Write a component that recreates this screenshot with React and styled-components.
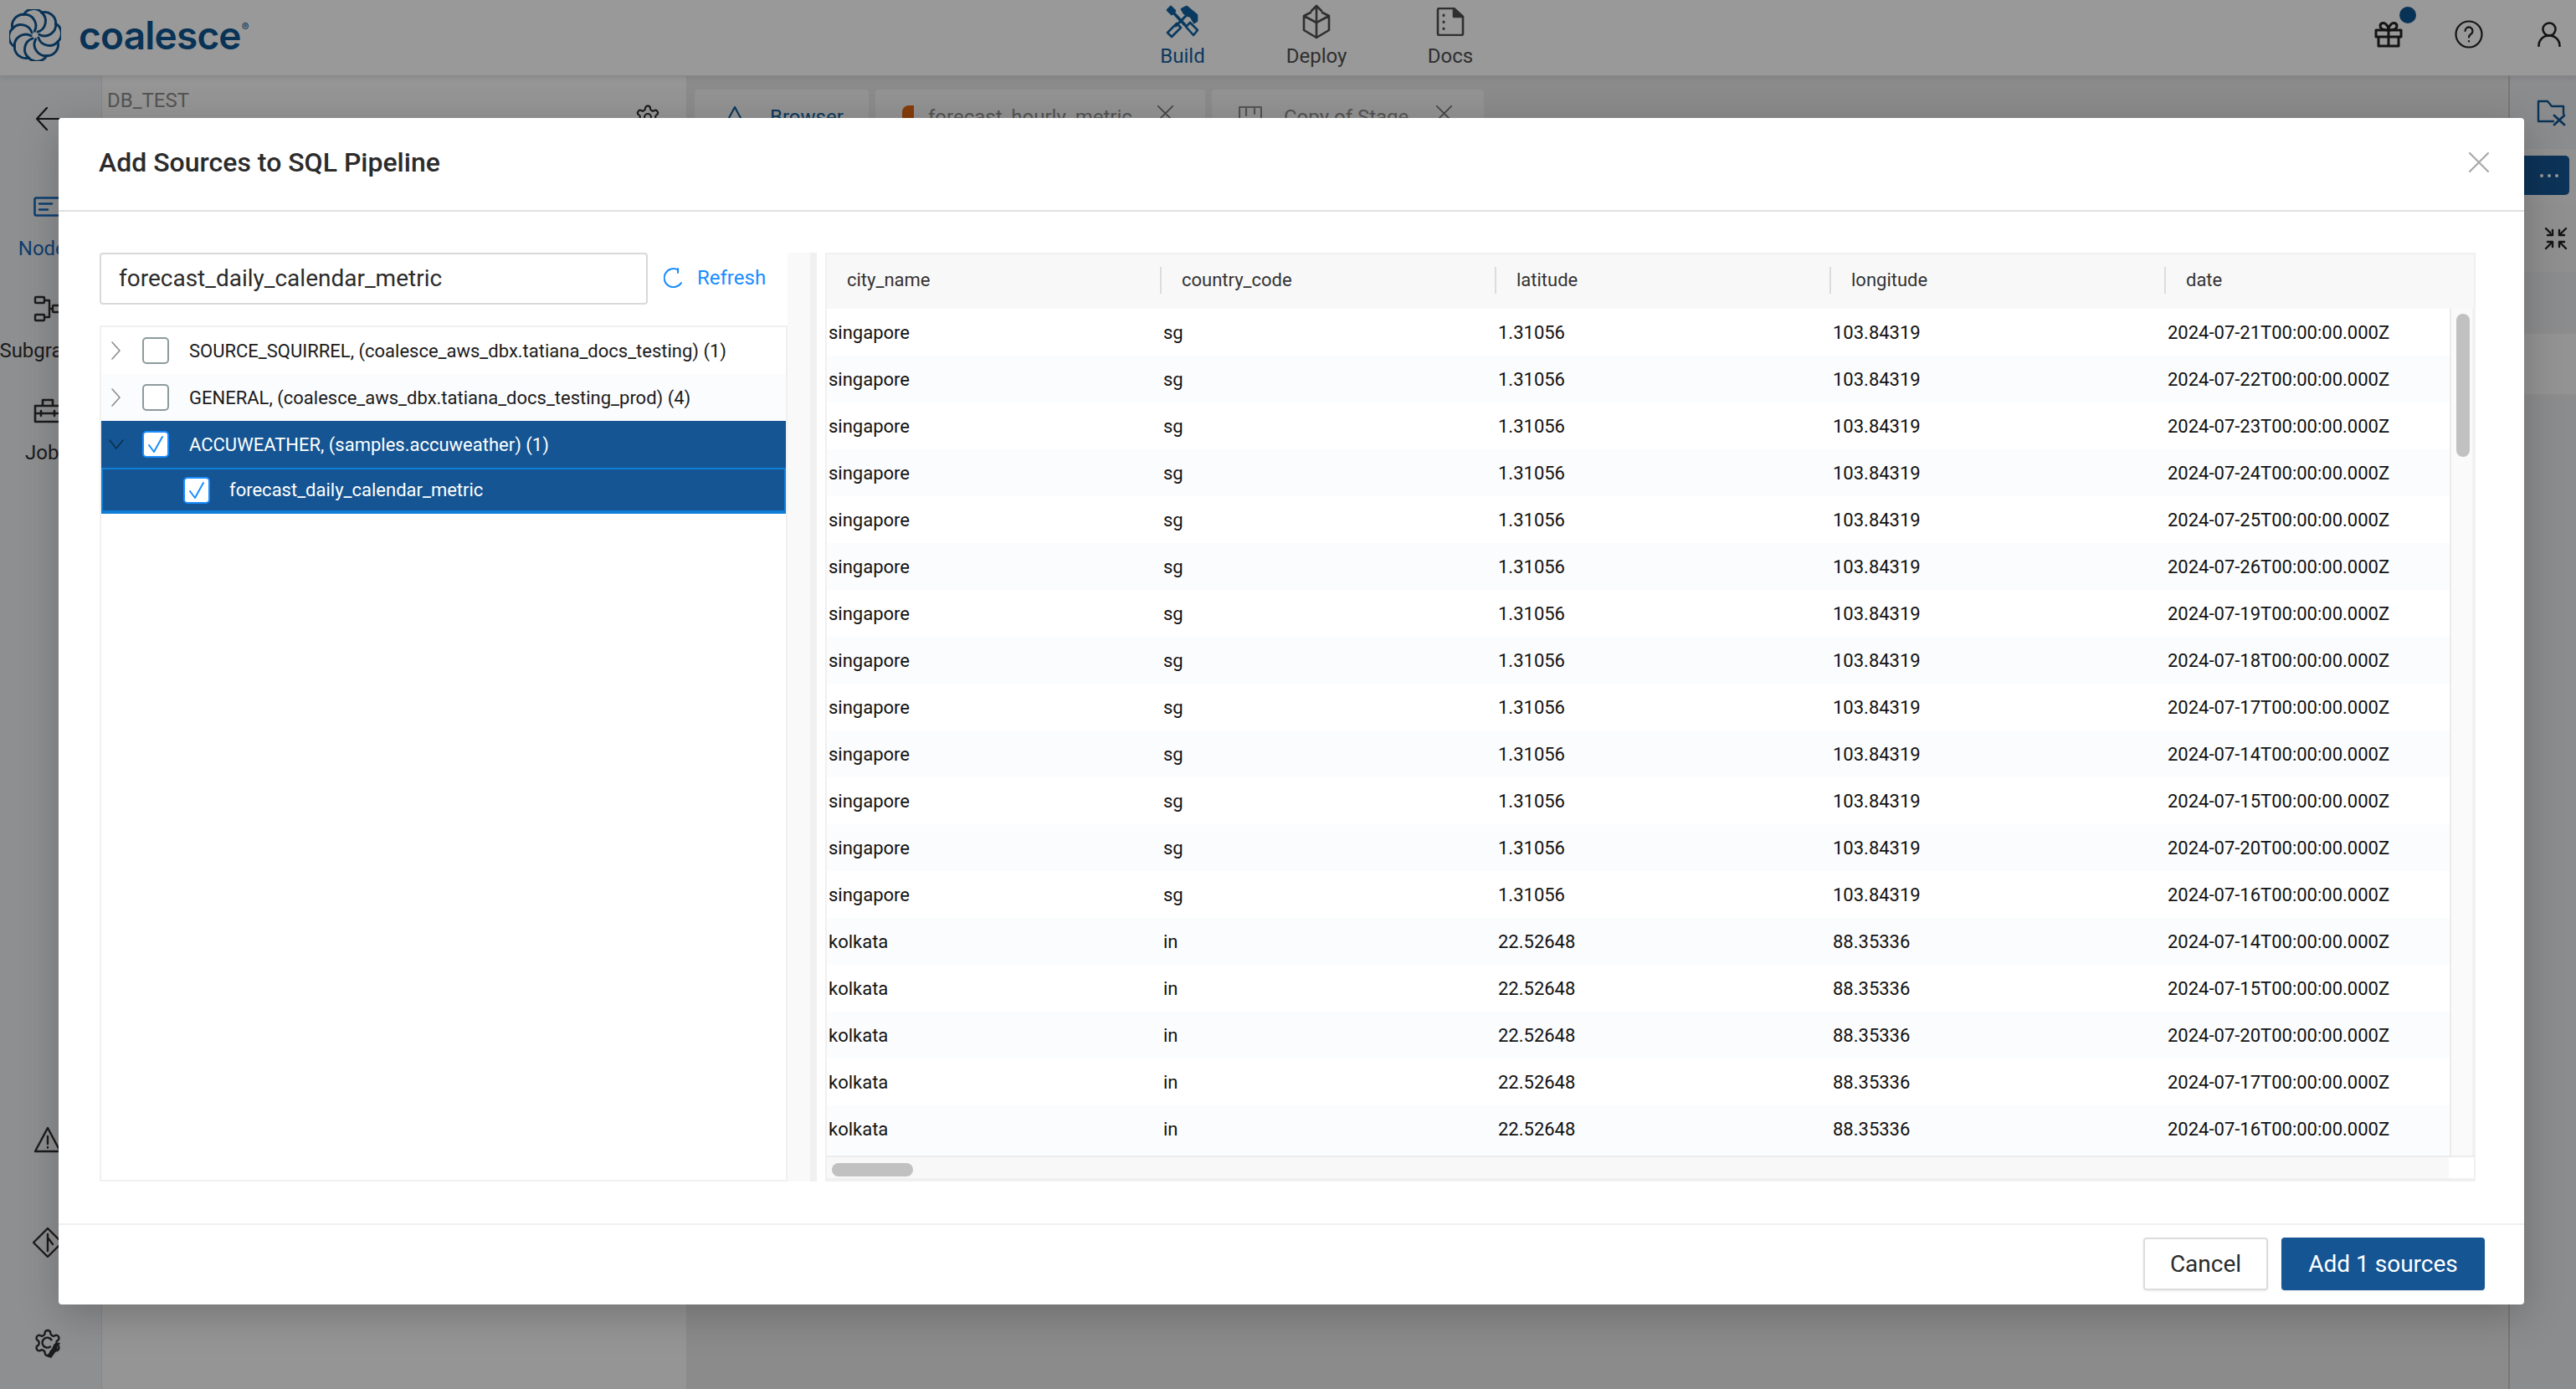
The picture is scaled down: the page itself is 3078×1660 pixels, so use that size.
import React from "react";
import styled, { createGlobalStyle } from "styled-components";

const GlobalStyle = createGlobalStyle`
  html, body { margin: 0; padding: 0; }
  body { font-family: Roboto, "Liberation Sans", sans-serif; background: #ecedf1; }
  * { box-sizing: border-box; }
`;

const DATES_SG = ["21", "22", "23", "24", "25", "26", "19", "18", "17", "14", "15", "20", "16"];
const DATES_KO = ["14", "15", "20", "17", "16"];
const ROWS = [
  ...DATES_SG.map((d) => ["singapore", "sg", "1.31056", "103.84319", `2024-07-${d}T00:00:00.000Z`]),
  ...DATES_KO.map((d) => ["kolkata", "in", "22.52648", "88.35336", `2024-07-${d}T00:00:00.000Z`]),
];
const COLUMNS = ["city_name", "country_code", "latitude", "longitude", "date"];

const GEAR_PATH =
  "M12.22 2h-.44a2 2 0 0 0-2 2v.18a2 2 0 0 1-1 1.73l-.43.25a2 2 0 0 1-2 0l-.15-.08a2 2 0 0 0-2.73.73l-.22.38a2 2 0 0 0 .73 2.73l.15.1a2 2 0 0 1 1 1.72v.51a2 2 0 0 1-1 1.74l-.15.09a2 2 0 0 0-.73 2.73l.22.38a2 2 0 0 0 2.73.73l.15-.08a2 2 0 0 1 2 0l.43.25a2 2 0 0 1 1 1.73V20a2 2 0 0 0 2 2h.44a2 2 0 0 0 2-2v-.18a2 2 0 0 1 1-1.73l.43-.25a2 2 0 0 1 2 0l.15.08a2 2 0 0 0 2.73-.73l.22-.39a2 2 0 0 0-.73-2.73l-.15-.08a2 2 0 0 1-1-1.74v-.5a2 2 0 0 1 1-1.74l.15-.09a2 2 0 0 0 .73-2.73l-.22-.38a2 2 0 0 0-2.73-.73l-.15.08a2 2 0 0 1-2 0l-.43-.25a2 2 0 0 1-1-1.73V4a2 2 0 0 0-2-2z";

const Page = styled.div`
  position: relative;
  width: 3078px;
  height: 1660px;
  overflow: hidden;
  display: flex;
  flex-direction: column;
`;

const TopBar = styled.header`
  height: 91px;
  flex: none;
  background: #fff;
  border-bottom: 1px solid #e2e2e2;
  box-shadow: 0 2px 6px rgba(0, 0, 0, 0.08);
  display: grid;
  grid-template-columns: 1fr auto 1fr;
  align-items: center;
  position: relative;
  z-index: 1;
`;

const Brand = styled.div`
  display: flex;
  align-items: center;
  gap: 21px;
  padding: 0 0 6px 11px;
`;

const Wordmark = styled.span`
  font-family: Inter, Lato, sans-serif;
  font-weight: 600;
  font-size: 46px;
  line-height: 1;
  letter-spacing: -0.8px;
  color: #10558f;

  sup {
    font-size: 13px;
    font-weight: 400;
    position: relative;
    top: -6px;
    left: 1px;
    letter-spacing: 0;
    line-height: 0;
  }
`;

const NavList = styled.nav`
  display: flex;
  align-self: start;
  padding: 4px 0 0 68px;
`;

const NavItem = styled.div`
  width: 160px;
  display: flex;
  flex-direction: column;
  align-items: center;
  font-size: 24px;
  line-height: 28px;
  color: ${(p) => (p.$active ? "#10609f" : "#4f4f4f")};
`;

const NavIconSlot = styled.span`
  height: 44px;
  margin-bottom: 5px;
  display: flex;
  align-items: center;
`;

const TopActions = styled.div`
  display: flex;
  justify-content: flex-end;
  align-items: center;
  gap: 65px;
  padding: 0 18px 8px 0;
  color: #222;
`;

const GiftWrap = styled.div`
  position: relative;
  display: flex;
  margin-right: -3px;
`;

const GiftDot = styled.span`
  position: absolute;
  top: -17px;
  right: -16px;
  width: 20px;
  height: 20px;
  border-radius: 50%;
  background: #10558f;
`;

const Body = styled.div`
  flex: 1;
  display: flex;
  min-height: 0;
`;

const LeftRail = styled.aside`
  width: 122px;
  flex: none;
  display: flex;
  flex-direction: column;
  padding-top: 37px;
  border-right: 1px solid #dfe0e4;
  background: #edeef2;
`;

const BackIcon = styled.div`
  padding-left: 42px;
  height: 101px;
  color: #222;
`;

const RailItem = styled.div`
  height: ${(p) => p.$h || 122}px;
  flex: none;
  display: flex;
  flex-direction: column;
  align-items: center;
  color: ${(p) => (p.$active ? "#1668b8" : "#2e2e2e")};
  font-size: 24px;
  line-height: 28px;
  white-space: nowrap;
  padding-right: 8px;
`;

const RailIconSlot = styled.span`
  height: 36px;
  margin-bottom: 18px;
  display: flex;
  align-items: center;
  flex: none;
`;

const RailSpacer = styled.div`
  flex: 1;
`;

const DbPanel = styled.section`
  width: 699px;
  flex: none;
  background: #f8f8f8;
  border-right: 1px solid #e4e4e4;
`;

const DbHead = styled.div`
  display: flex;
  justify-content: space-between;
  padding: 15px 30px 0 6px;
  font-size: 24px;
  line-height: 28px;
  color: #8d8d8d;
  svg { margin-top: 18px; color: #2e2e2e; }
`;

const Workspace = styled.section`
  flex: 1;
  background: #e8e8e8;
  padding: 16px 0 0 9px;
`;

const TabRow = styled.div`
  display: flex;
  gap: 8px;
`;

const Tab = styled.div`
  width: ${(p) => p.$w}px;
  height: 60px;
  background: #f5f5f5;
  border-radius: 4px 4px 0 0;
  display: flex;
  align-items: flex-start;
  padding: 19px 38px 0 32px;
  gap: 26px;
  font-size: 24px;
  line-height: 28px;
  color: ${(p) => (p.$active ? "#10609f" : "#8d8d8d")};
  white-space: nowrap;

  svg { flex: none; }
`;

const TabMark = styled.span`
  width: 14px;
  height: 40px;
  flex: none;
  background: #e0640f;
  border-radius: 8px 0 0 0;
  margin: 0 -9px 0 0;
`;

const TabClose = styled.span`
  margin-left: auto;
  color: #777;
  display: flex;
`;

const RightRail = styled.aside`
  width: 81px;
  flex: none;
  border-left: 2px solid #c9c9c9;
  background: #e8e9ec;
  display: flex;
  flex-direction: column;
`;

const RailTop = styled.div`
  height: 87px;
  padding: 28px 0 0 32px;
  color: #10558f;
`;

const RailBand = styled.div`
  height: 65px;
  background: #f0f0f0;
  padding-top: 8px;
`;

const MoreButton = styled.div`
  width: 71px;
  height: 47px;
  background: #155593;
  border-radius: 0 5px 5px 0;
  color: #fff;
  display: flex;
  justify-content: flex-end;
  align-items: center;
  gap: 5px;
  padding-right: 13px;
`;

const MoreDot = styled.span`
  width: 4px;
  height: 4px;
  border-radius: 50%;
  background: #fff;
`;

const RailMid = styled.div`
  height: 82px;
  background: #eeeeef;
  padding: 28px 0 0 41px;
  color: #222;
`;

const RailCard = styled.div`
  margin-top: 74px;
  height: 72px;
  background: #f5f5f5;
  border-radius: 0 0 0 6px;
  box-shadow: 0 0 0 4px #ebebeb;
`;

const Backdrop = styled.div`
  position: absolute;
  inset: 0;
  background: rgba(0, 0, 0, 0.4);
  z-index: 2;
`;

const Modal = styled.div`
  position: absolute;
  z-index: 3;
  left: 70px;
  top: 141px;
  width: 2946px;
  height: 1418px;
  background: #fff;
  border-radius: 4px;
  box-shadow: 0 12px 48px rgba(0, 0, 0, 0.22);
  display: flex;
  flex-direction: column;
`;

const ModalHeader = styled.div`
  height: 112px;
  flex: none;
  border-bottom: 2px solid #e0e0e0;
  display: flex;
  align-items: center;
  justify-content: space-between;
  padding: 0 42px 4px 48px;
`;

const Title = styled.h2`
  margin: 0;
  font-size: 32px;
  line-height: 40px;
  font-weight: 500;
  color: #2b2b2b;
`;

const CloseIcon = styled.span`
  display: flex;
  color: #a8a8a8;
`;

const ModalBody = styled.div`
  flex: 1;
  min-height: 0;
  display: flex;
  padding: 49px 58px 50px 49px;
`;

const LeftColumn = styled.div`
  width: 822px;
  flex: none;
  display: flex;
  flex-direction: column;
  gap: 25px;
`;

const SearchRow = styled.div`
  display: flex;
  align-items: center;
  gap: 19px;
`;

const SearchInput = styled.div`
  width: 655px;
  height: 62px;
  border: 2px solid #d9d9d9;
  border-radius: 4px;
  padding-left: 21px;
  font-size: 28px;
  line-height: 58px;
  color: #2b2b2b;
`;

const RefreshLink = styled.div`
  display: flex;
  align-items: center;
  gap: 16px;
  font-size: 24px;
  color: #1a8cff;
  line-height: 30px;
  padding-bottom: 2px;
`;

const Tree = styled.div`
  flex: 1;
  border: 2px solid #f0f0f0;
  min-height: 0;
`;

const TreeRow = styled.div`
  height: ${(p) => (p.$leaf ? 55 : 56)}px;
  display: flex;
  align-items: center;
  padding-left: ${(p) => (p.$leaf ? 96 : 8)}px;
  background: ${(p) => (p.$selected ? "#155593" : p.$alt ? "#fbfcfe" : "#fff")};
  color: ${(p) => (p.$selected ? "#fff" : "#1a1a1a")};
  font-size: 22px;
  border: ${(p) => (p.$leaf ? "2px solid #0f7ed6" : "0")};
  border-bottom-width: ${(p) => (p.$leaf ? "4px" : "0")};
`;

const Chevron = styled.span`
  width: 41px;
  flex: none;
  display: flex;
  color: ${(p) => (p.$open ? "#0a3050" : "#8c8c8c")};
`;

const Checkbox = styled.span`
  width: 32px;
  height: 32px;
  flex: none;
  border-radius: 5px;
  border: 2px solid ${(p) => (p.$checked ? "#1a8cff" : "#8d9a9c")};
  background: #fff;
  color: #1a8cff;
  display: flex;
  align-items: center;
  justify-content: center;
  margin-right: ${(p) => (p.$tight ? 23 : 24)}px;
`;

const Splitter = styled.div`
  width: 35px;
  flex: none;
  margin-right: 10px;
  background: #f9f9f9;
  border-right: 8px solid #f0f0f0;
`;

const DataTable = styled.div`
  flex: 1;
  min-width: 0;
  border: 2px solid #f0f0f0;
  border-bottom-width: 4px;
  display: flex;
  flex-direction: column;
`;

const TableHead = styled.div`
  height: 65px;
  flex: none;
  background: #f8f8f8;
  display: grid;
  grid-template-columns: 398px 400px 400px 400px 1fr;
  align-items: center;
  padding-bottom: 4px;
`;

const HeadCell = styled.div`
  font-size: 22px;
  line-height: 32px;
  color: #333;
  padding-left: ${(p) => (p.$first ? 22 : 24)}px;
  border-left: 2px solid ${(p) => (p.$first ? "transparent" : "#dcdcdc")};
`;

const TableMain = styled.div`
  flex: 1;
  min-height: 0;
  display: flex;
  border-bottom: 2px solid #ececec;
`;

const Rows = styled.div`
  flex: 1;
  min-width: 0;
  display: flex;
  flex-direction: column;
  overflow: hidden;
`;

const Row = styled.div`
  flex: none;
  height: 56px;
  background: ${(p) => (p.$alt ? "#fbfcfe" : "#fff")};
  display: grid;
  grid-template-columns: 400px 400px 400px 400px 1fr;
  padding-left: 2px;
  font-size: 22px;
  line-height: 58px;
  color: #111;

  &:last-child {
    flex: 1;
  }
`;

const VTrack = styled.div`
  width: 29px;
  flex: none;
  background: #fafafa;
  border-left: 2px solid #ececec;
  border-right: 2px solid #f2f2f2;
  padding: 6px 0 0 6px;
`;

const VThumb = styled.div`
  width: 16px;
  height: 171px;
  background: #c1c1c1;
  border-radius: 8px;
`;

const HTrack = styled.div`
  height: 25px;
  flex: none;
  background: #f8f8f8;
  padding: 7px 0 0 6px;
  position: relative;
`;

const HThumb = styled.div`
  width: 97px;
  height: 16px;
  background: #c1c1c1;
  border-radius: 8px;
`;

const TrackCorner = styled.span`
  position: absolute;
  top: 0;
  right: 0;
  width: 30px;
  height: 100%;
  background: #fff;
`;

const ModalFooter = styled.div`
  flex: none;
  height: 97px;
  border-top: 2px solid #f0f0f0;
  display: flex;
  justify-content: flex-end;
  align-items: flex-start;
  gap: 16px;
  padding: 15px 47px 0 0;
`;

const Button = styled.button`
  height: 63px;
  width: ${(p) => p.$w}px;
  font-family: Roboto, sans-serif;
  font-size: 28px;
  border-radius: 4px;
  cursor: pointer;
  border: ${(p) => (p.$primary ? "0" : "2px solid #dcdcdc")};
  background: ${(p) => (p.$primary ? "#155593" : "#fff")};
  color: ${(p) => (p.$primary ? "#fff" : "#2b2b2b")};
  box-shadow: 0 1px 3px rgba(0, 0, 0, 0.08);
`;

function CoalesceMark() {
  const blades = [0, 45, 90, 135, 180, 225, 270, 315];
  return (
    <svg width="62" height="62" viewBox="-32 -32 64 64" fill="none" stroke="#10558f" strokeWidth="3" strokeLinecap="round">
      {blades.map((a) => (
        <g key={a} transform={`rotate(${a})`}>
          <path d="M3 -4A14 14 0 0 0 8 -28" />
          <path d="M8 -28A14 14 0 0 1 25.500 -14.100" />
        </g>
      ))}
    </svg>
  );
}

const Svg = ({ s = 32, w, h, vb, sw = 2.4, children, ...rest }) => (
  <svg
    width={w || s}
    height={h || s}
    viewBox={vb || "0 0 32 32"}
    fill="none"
    stroke="currentColor"
    strokeWidth={sw}
    strokeLinecap="round"
    strokeLinejoin="round"
    {...rest}
  >
    {children}
  </svg>
);

const BuildIcon = () => (
  <Svg w={40} h={40} vb="0 0 40 40" sw={2.6}>
    <path d="M2 6l4-4 5 5-4 4z" fill="currentColor" />
    <path d="M8 8l15 16" strokeWidth="3.4" />
    <path d="M24 26l5-5 9 9-5 6z" />
    <path d="M19 5l6-3 12 10v7l-3 2-4-7-5-2-3-2z" fill="currentColor" />
    <path d="M26 11L12 25" strokeWidth="3" />
    <path d="M2 33L13 22l5 5L7 38z" />
  </Svg>
);

const DeployIcon = () => (
  <Svg w={34} h={42} vb="0 0 34 42" sw={2.6}>
    <path d="M17 22v18M2 14l15 8 15-8M2 14v17l15 9 15-9V14l-8-4M2 14l8-4" />
    <path d="M17 19V2M11 8l6-6 6 6" />
  </Svg>
);

const DocsIcon = () => (
  <Svg w={34} h={34} vb="0 0 34 34" sw={2.6}>
    <path d="M4 1h17l11 10v20a2 2 0 0 1-2 2H4a2 2 0 0 1-2-2V3a2 2 0 0 1 2-2z" />
    <path d="M21 1v10h11z" fill="currentColor" />
    <path d="M9 9v.5M9 17v.5M9 25v.5" strokeWidth="3" />
  </Svg>
);

const GiftIcon = () => (
  <Svg w={34} h={32} vb="0 0 34 32" sw={3}>
    <path d="M2 11h30v8H2zM5 19v11h24V19M17 11v19" />
    <path d="M17 11c-7 0-10-2-10-5s4-5 7-2 3 7 3 7zM17 11c7 0 10-2 10-5s-4-5-7-2-3 7-3 7z" />
  </Svg>
);

const HelpIcon = () => (
  <Svg w={34} h={34} vb="0 0 34 34" sw={2.2}>
    <circle cx="17" cy="17" r="15.500" />
    <path d="M12.500 13a4.500 4.500 0 1 1 7 3.700c-1.600 1-2.500 1.900-2.500 3.800" />
    <path d="M17 25v.5" />
  </Svg>
);

const UserIcon = () => (
  <Svg w={28} h={30} vb="0 0 28 30" sw={2.6}>
    <circle cx="14" cy="9" r="7.500" />
    <path d="M1.500 29c0-7 5-12.500 12.500-12.500S26.500 22 26.500 29" />
  </Svg>
);

const BackArrow = () => (
  <Svg w={30} h={28} vb="0 0 30 28" sw={2.2}>
    <path d="M28 14H2M14 1L2 14l12 13" />
  </Svg>
);

const NodesIcon = () => (
  <Svg w={34} h={24} vb="0 0 34 24" sw={2.6}>
    <rect x="1.500" y="1.500" width="31" height="21" rx="2" />
    <path d="M7 8.500h15M7 15.500h10" />
  </Svg>
);

const GraphIcon = () => (
  <Svg w={34} h={32} vb="0 0 34 32" sw={2.4}>
    <rect x="2" y="2" width="11" height="7" rx="1" />
    <rect x="2" y="23" width="11" height="7" rx="1" />
    <rect x="23" y="12" width="9" height="8" rx="1" />
    <path d="M13 6h6v20h-6M19 16h4" />
  </Svg>
);

const JobsIcon = () => (
  <Svg w={34} h={30} vb="0 0 34 30" sw={2.6}>
    <path d="M2 9h30v19H2zM2 18h30M11 9V2h12v7M9 15v6M25 15v6" />
  </Svg>
);

const WarnIcon = () => (
  <Svg w={34} h={32} vb="0 0 34 32" sw={2.4}>
    <path d="M17 2L2 30h30z" />
    <path d="M17 12v9M17 25v.5" />
  </Svg>
);

const GitIcon = () => (
  <Svg w={36} h={36} vb="0 0 36 36" sw={2.4}>
    <path d="M18 1L35 18 18 35 1 18z" />
    <path d="M18 8v20M18 12l6 8" />
  </Svg>
);

const GearWrench = () => (
  <Svg w={36} h={36} vb="0 0 24 24" sw={1.6}>
    <path d={GEAR_PATH} />
    <path d="M15 9.500a4 4 0 1 0-1 5.500" />
    <path d="M21 12.500l-2.500 2 .6 2-4.600 6.500-2.200-.6 4-6 1.500-3.200z" fill="currentColor" />
  </Svg>
);

const FolderX = () => (
  <Svg w={36} h={32} vb="0 0 36 32" sw={2.4}>
    <path d="M20 26H2V2h11l5 6h14v9" />
    <path d="M21 19l12 11M33 19L21 30" strokeWidth="2.800" />
  </Svg>
);

const CollapseIcon = () => (
  <Svg w={28} h={28} vb="0 0 28 28" sw={2.4}>
    <path d="M2 2l8 8M10 4v6H4M26 2l-8 8M18 4v6h6M2 26l8-8M10 24v-6H4M26 26l-8-8M18 24v-6h6" />
  </Svg>
);

const GearIcon = () => (
  <Svg s={32} vb="0 0 24 24" sw={1.6}>
    <path d={GEAR_PATH} />
    <circle cx="12" cy="12" r="3" />
  </Svg>
);

const TreeArrow = ({ open }) => (
  <Svg w={20} h={22} vb="0 0 20 22" sw={1.6}>
    {open ? <path d="M2 6l8 10 8-10" /> : <path d="M5 1l9 10-9 10" />}
  </Svg>
);

const CheckMark = () => (
  <Svg w={22} h={22} vb="0 0 22 22" sw={2}>
    <path d="M3 12l6 8L19 2" />
  </Svg>
);

const RefreshIcon = () => (
  <Svg w={24} h={24} vb="0 0 24 24" sw={2}>
    <path d="M21 18A11 11 0 1 1 17 2.500" />
    <path d="M17 1v5" />
  </Svg>
);

const XIcon = ({ s = 24, sw = 2.2 }) => (
  <Svg s={s} vb="0 0 24 24" sw={sw}>
    <path d="M1 1l22 22M23 1L1 23" />
  </Svg>
);

function Background() {
  return (
    <>
      <TopBar>
        <Brand>
          <CoalesceMark />
          <Wordmark>
            coalesce<sup>®</sup>
          </Wordmark>
        </Brand>
        <NavList>
          <NavItem $active>
            <NavIconSlot>
              <BuildIcon />
            </NavIconSlot>
            Build
          </NavItem>
          <NavItem>
            <NavIconSlot>
              <DeployIcon />
            </NavIconSlot>
            Deploy
          </NavItem>
          <NavItem>
            <NavIconSlot>
              <DocsIcon />
            </NavIconSlot>
            Docs
          </NavItem>
        </NavList>
        <TopActions>
          <GiftWrap>
            <GiftIcon />
            <GiftDot />
          </GiftWrap>
          <HelpIcon />
          <UserIcon />
        </TopActions>
      </TopBar>
      <Body>
        <LeftRail>
          <BackIcon>
            <BackArrow />
          </BackIcon>
          <RailItem $active>
            <RailIconSlot>
              <NodesIcon />
            </RailIconSlot>
            Nodes
          </RailItem>
          <RailItem>
            <RailIconSlot>
              <GraphIcon />
            </RailIconSlot>
            Subgraphs
          </RailItem>
          <RailItem>
            <RailIconSlot>
              <JobsIcon />
            </RailIconSlot>
            Jobs
          </RailItem>
          <RailSpacer />
          <RailItem $h={123}>
            <RailIconSlot>
              <WarnIcon />
            </RailIconSlot>
          </RailItem>
          <RailItem $h={120}>
            <RailIconSlot>
              <GitIcon />
            </RailIconSlot>
          </RailItem>
          <RailItem $h={73}>
            <RailIconSlot>
              <GearWrench />
            </RailIconSlot>
          </RailItem>
        </LeftRail>
        <DbPanel>
          <DbHead>
            DB_TEST
            <GearIcon />
          </DbHead>
        </DbPanel>
        <Workspace>
          <TabRow>
            <Tab $active $w={208}>
              <Svg w={32} h={32} sw={2.2}>
                <path d="M16 2L2 28h28z" />
              </Svg>
              Browser
            </Tab>
            <Tab $w={394}>
              <TabMark />
              forecast_hourly_metric
              <TabClose>
                <XIcon s={19} />
              </TabClose>
            </Tab>
            <Tab $w={325}>
              <Svg w={28} h={30} vb="0 0 28 30" sw={2.2}>
                <rect x="1" y="2" width="26" height="26" />
                <path d="M9 2v10M19 2v8M19 16v4" />
              </Svg>
              Copy of Stage
              <TabClose>
                <XIcon s={19} />
              </TabClose>
            </Tab>
          </TabRow>
        </Workspace>
        <RightRail>
          <RailTop>
            <FolderX />
          </RailTop>
          <RailBand>
            <MoreButton>
              <MoreDot />
              <MoreDot />
              <MoreDot />
            </MoreButton>
          </RailBand>
          <RailMid>
            <CollapseIcon />
          </RailMid>
          <RailCard />
        </RightRail>
      </Body>
    </>
  );
}

function SourceTree() {
  return (
    <Tree>
      <TreeRow>
        <Chevron>
          <TreeArrow />
        </Chevron>
        <Checkbox />
        SOURCE_SQUIRREL, (coalesce_aws_dbx.tatiana_docs_testing) (1)
      </TreeRow>
      <TreeRow $alt>
        <Chevron>
          <TreeArrow />
        </Chevron>
        <Checkbox />
        GENERAL, (coalesce_aws_dbx.tatiana_docs_testing_prod) (4)
      </TreeRow>
      <TreeRow $selected>
        <Chevron $open>
          <TreeArrow open />
        </Chevron>
        <Checkbox $checked>
          <CheckMark />
        </Checkbox>
        ACCUWEATHER, (samples.accuweather) (1)
      </TreeRow>
      <TreeRow $selected $leaf>
        <Checkbox $checked $tight>
          <CheckMark />
        </Checkbox>
        forecast_daily_calendar_metric
      </TreeRow>
    </Tree>
  );
}

function PreviewTable() {
  return (
    <DataTable>
      <TableHead>
        {COLUMNS.map((c, i) => (
          <HeadCell key={c} $first={i === 0}>
            {c}
          </HeadCell>
        ))}
      </TableHead>
      <TableMain>
        <Rows>
          {ROWS.map((r, i) => (
            <Row key={i} $alt={i % 2 === 1}>
              {r.map((v, j) => (
                <span key={j}>{v}</span>
              ))}
            </Row>
          ))}
        </Rows>
        <VTrack>
          <VThumb />
        </VTrack>
      </TableMain>
      <HTrack>
        <HThumb />
        <TrackCorner />
      </HTrack>
    </DataTable>
  );
}

export default function App() {
  return (
    <Page>
      <GlobalStyle />
      <Background />
      <Backdrop />
      <Modal>
        <ModalHeader>
          <Title>Add Sources to SQL Pipeline</Title>
          <CloseIcon>
            <XIcon />
          </CloseIcon>
        </ModalHeader>
        <ModalBody>
          <LeftColumn>
            <SearchRow>
              <SearchInput>forecast_daily_calendar_metric</SearchInput>
              <RefreshLink>
                <RefreshIcon />
                Refresh
              </RefreshLink>
            </SearchRow>
            <SourceTree />
          </LeftColumn>
          <Splitter />
          <PreviewTable />
        </ModalBody>
        <ModalFooter>
          <Button $w={149}>Cancel</Button>
          <Button $primary $w={243}>
            Add 1 sources
          </Button>
        </ModalFooter>
      </Modal>
    </Page>
  );
}
